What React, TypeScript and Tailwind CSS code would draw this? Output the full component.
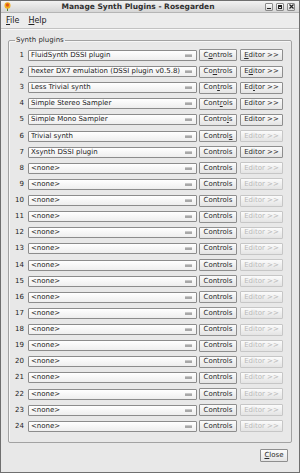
import React from 'react';

const plugins = [
  'FluidSynth DSSI plugin',
  'hexter DX7 emulation (DSSI plugin v0.5.8)',
  'Less Trivial synth',
  'Simple Stereo Sampler',
  'Simple Mono Sampler',
  'Trivial synth',
  'Xsynth DSSI plugin',
  ...Array.from({ length: 17 }, () => '<none>'),
];

// mnemonic letter index per row, -1 when none
const controlsKeys = [1, 2, 3, 4, 6, 7];
const editorKeys = [0, 1, 2];
const editorEnabled = [true, true, true, true, true, false, true];

function Mnemonic({ text, at }: { text: string; at: number }) {
  if (at < 0) return <>{text}</>;
  return (
    <>
      {text.slice(0, at)}
      <span className="underline underline-offset-[1px]">{text[at]}</span>
      {text.slice(at + 1)}
    </>
  );
}

function Button({
  label,
  keyAt = -1,
  disabled = false,
  className = '',
}: {
  label: string;
  keyAt?: number;
  disabled?: boolean;
  className?: string;
}) {
  return (
    <div
      className={`flex items-center justify-center rounded-[1px] border bg-gradient-to-b from-[#fbfbfb] to-[#e4e4e4] ${
        disabled ? 'border-[#c6c6c6] text-[#b9b9b9]' : 'border-[#8e8e8e] text-[#2a2a2a]'
      } ${className}`}
    >
      <Mnemonic text={label} at={keyAt} />
    </div>
  );
}

function Combo({ value }: { value: string }) {
  return (
    <div className="flex h-[11px] w-[169px] items-center rounded-[1px] border border-[#8c8c8c] bg-gradient-to-b from-[#ffffff] to-[#eeeeee] pl-[2px] pr-[4px]">
      <span className="flex-1 truncate text-[#222]">{value}</span>
      <div className="ml-[2px] h-[3px] w-[7px] border-t border-[#c8c8c8] bg-[#a8a8a8]" />
    </div>
  );
}

export default function App() {
  return (
    <div className="flex h-[473px] w-[300px] flex-col overflow-hidden border border-[#6f6f6f] bg-[#e8e8e8] font-['DejaVu_Sans',sans-serif] text-[7px] leading-[11px] text-[#222]">
      {/* title bar */}
      <div className="flex h-[12px] shrink-0 items-center border-b border-[#b5b5b5] bg-gradient-to-b from-[#f2f2f2] to-[#d6d6d6] pl-[3px] pr-[4px]">
        <svg width="7" height="9" viewBox="0 0 7 9">
          <path d="M3.5 9 L3.5 5" stroke="#4f8a2a" strokeWidth="1" />
          <ellipse cx="3.5" cy="3.5" rx="3" ry="3.3" fill="#f2b01e" />
          <ellipse cx="3.5" cy="3" rx="1.6" ry="1.8" fill="#e0551b" />
        </svg>
        <div className="flex-1 text-center text-[7.5px] font-bold text-[#303030]">
          Manage Synth Plugins - Rosegarden
        </div>
        <div className="flex gap-[3px]">
          {['min', 'max', 'close'].map((k) => (
            <div
              key={k}
              className="flex h-[8px] w-[8px] items-center justify-center rounded-[1px] border border-[#8a8a8a] bg-gradient-to-b from-[#fafafa] to-[#d9d9d9]"
            >
              {k === 'min' && <div className="mt-[3px] h-[1px] w-[4px] bg-[#222]" />}
              {k === 'max' && <div className="h-[4px] w-[4px] border border-t-2 border-[#222]" />}
              {k === 'close' && (
                <svg width="5" height="5" viewBox="0 0 5 5">
                  <path d="M0.5 0.5 L4.5 4.5 M4.5 0.5 L0.5 4.5" stroke="#222" strokeWidth="1.2" />
                </svg>
              )}
            </div>
          ))}
        </div>
      </div>

      {/* menu bar */}
      <div className="flex h-[16px] shrink-0 items-center gap-[9px] border-b border-[#c2c2c2] bg-[#ececec] pl-[5px] text-[8px] shadow-[0_1px_0_#f8f8f8]">
        <span>
          <Mnemonic text="File" at={0} />
        </span>
        <span>
          <Mnemonic text="Help" at={0} />
        </span>
      </div>

      {/* content */}
      <div className="flex flex-1 flex-col px-[7px] pt-[6px]">
        <fieldset className="rounded-[2px] border border-[#a2a2a2] pb-[8px] pl-[2px] shadow-[inset_1px_1px_0_#f6f6f6]">
          <legend className="ml-[4px] px-[1px] leading-[10px] text-[#2a2a2a]">Synth plugins</legend>
          <div className="flex flex-col pt-[2.4px]">
            {plugins.map((p, i) => (
              <div key={i} className="flex h-[16.14px] items-center">
                <div className="w-[14px] pr-[1px] text-right">{i + 1}</div>
                <div className="ml-[3px]">
                  <Combo value={p} />
                </div>
                <Button
                  label="Controls"
                  keyAt={i < controlsKeys.length ? controlsKeys[i] : -1}
                  className="ml-[2px] h-[12px] w-[38px]"
                />
                <Button
                  label="Editor >>"
                  keyAt={i < editorKeys.length ? editorKeys[i] : -1}
                  disabled={!(editorEnabled[i] ?? false)}
                  className="ml-[3px] h-[12px] w-[43px]"
                />
              </div>
            ))}
          </div>
        </fieldset>

        <div className="mt-[6px] flex justify-end pr-[4px]">
          <Button label="Close" keyAt={0} className="h-[13px] w-[28px]" />
        </div>
      </div>
    </div>
  );
}
